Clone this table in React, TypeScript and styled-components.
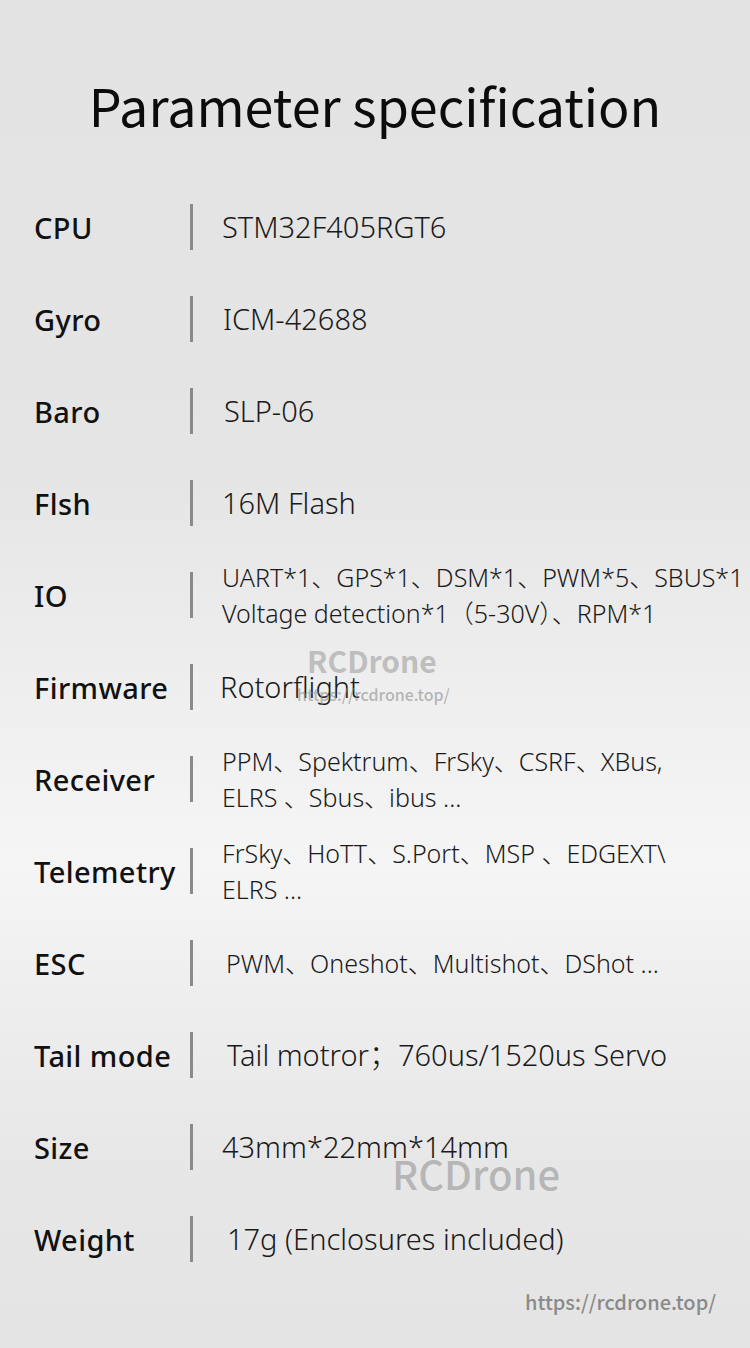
import styled, { createGlobalStyle } from "styled-components";

// big = single line values, small = the long lists
const specs = [
    { name: "CPU", value: ["STM32F405RGT6"], size: 29 },
    { name: "Gyro", value: ["ICM-42688"], size: 29, shift: 1 },
    { name: "Baro", value: ["SLP-06"], size: 29, shift: 2 },
    { name: "Flsh", value: ["16M Flash"], size: 29 },
    { name: "IO", value: ["UART*1、GPS*1、DSM*1、PWM*5、SBUS*1", "Voltage detection*1（5-30V）、RPM*1"], size: 25 },
    { name: "Firmware", value: ["Rotorflight"], size: 29, shift: -2 },
    { name: "Receiver", value: ["PPM、Spektrum、FrSky、CSRF、XBus,", "ELRS 、Sbus、ibus ..."], size: 25 },
    { name: "Telemetry", value: ["FrSky、HoTT、S.Port、MSP 、EDGEXT\\", "ELRS ..."], size: 25 },
    { name: "ESC", value: ["PWM、Oneshot、Multishot、DShot ..."], size: 25, shift: 4 },
    { name: "Tail mode", value: ["Tail motror；760us/1520us Servo"], size: 29, shift: 5 },
    { name: "Size", value: ["43mm*22mm*14mm"], size: 29 },
    { name: "Weight", value: ["17g (Enclosures included)"], size: 29, shift: 5 },
];

const App = () => {
    return (
        <Page>
            <GlobalStyle />
            <Title>Parameter specification</Title>
            <SpecList>
                {specs.map((s) => (
                    <SpecRow key={s.name}>
                        <Label>{s.name}</Label>
                        <Divider />
                        <Value $shift={s.shift ?? 0} $size={s.size}>
                            {s.value.map((line) => (
                                <span key={line}>{line}</span>
                            ))}
                        </Value>
                    </SpecRow>
                ))}
            </SpecList>
            <MarkSmall>RCDrone</MarkSmall>
            <UrlSmall>https://rcdrone.top/</UrlSmall>
            <MarkBig>RCDrone</MarkBig>
            <UrlBottom>https://rcdrone.top/</UrlBottom>
        </Page>
    )
}

const GlobalStyle = createGlobalStyle`
    html, body { margin:0;padding:0; }
    body { font-family:"Noto Sans","Noto Sans CJK SC",sans-serif;color:#111; }
`

const Page = styled.div`
    position:relative;width:750px;height:1348px;overflow:hidden;
    background:linear-gradient(180deg,#e3e3e3 0%,#e5e5e5 35%,#efefef 52%,#f5f5f5 64%,#eeeeee 74%,#e7e7e7 86%,#e4e4e4 100%);
`

const Title = styled.h1`
    margin:0;height:181px;padding-top:72px;box-sizing:border-box;
    font-family:"Noto Sans CJK SC",sans-serif;
    text-align:center;font-size:52px;font-weight:400;line-height:66px;color:#0c0c0c;
`

const SpecList = styled.div`
    display:flex;flex-direction:column;
`

const SpecRow = styled.div`
    display:grid;grid-template-columns:190px 3px 1fr;align-items:center;height:92px;
`

const Label = styled.div`
    padding-left:34px;font-size:29px;font-weight:500;letter-spacing:0.4px;color:#111;white-space:nowrap;
`

const Divider = styled.div`
    width:3px;height:46px;background:#8a8a8a;
`

const Value = styled.div<{ $shift: number; $size: number }>`
    display:flex;flex-direction:column;padding-left:${({ $shift }) => 29 + $shift}px;
    font-size:${({ $size }) => $size}px;font-weight:300;line-height:36px;color:#1a1a1a;white-space:nowrap;
`

const Mark = styled.div`
    position:absolute;font-family:"Noto Sans CJK SC",sans-serif;font-weight:700;
    color:rgba(150,150,150,0.55);white-space:nowrap;
`

const MarkSmall = styled(Mark)`
    left:307px;top:640px;font-size:30px;line-height:40px;
`

const UrlSmall = styled(Mark)`
    left:297px;top:683px;font-size:16px;line-height:22px;font-weight:500;color:rgba(140,140,140,0.6);
`

const MarkBig = styled(Mark)`
    left:392px;top:1147px;font-size:40px;line-height:52px;color:rgba(150,150,150,0.6);font-weight:500;
`

const UrlBottom = styled(Mark)`
    left:525px;top:1287px;font-size:20px;line-height:30px;font-weight:500;color:#8a8a8a;
`

export default App;
